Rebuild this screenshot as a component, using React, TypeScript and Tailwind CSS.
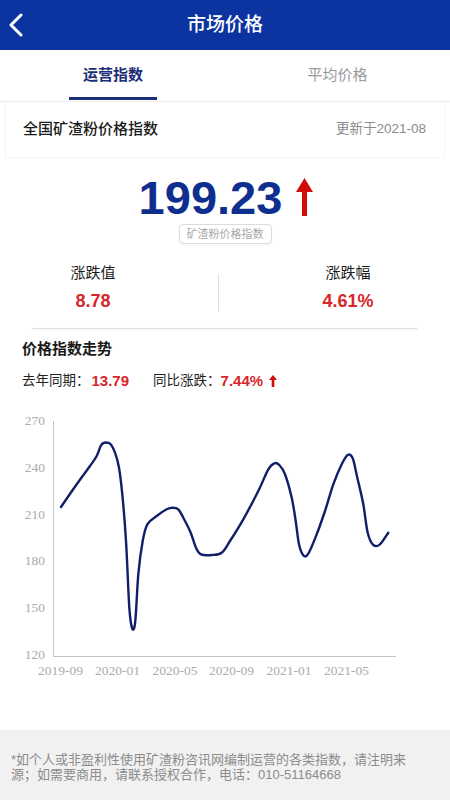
import React from "react"

const font = { fontFamily: '"Liberation Sans", "Noto Sans CJK SC", sans-serif' }

// curve points traced from the trend chart (svg coords)
const pts: [number, number][] = [
  [61, 111], [76.7, 88.3], [90, 70], [96.7, 60], [101, 49.3], [104.3, 46.7], [110, 47.7],
  [115, 56.7], [119, 71.7], [122.3, 98.3], [126, 145], [129.3, 211.7], [132.3, 232.7],
  [135.3, 225], [138.3, 178.3], [142.7, 145], [147.3, 128.3], [156.7, 120], [166.7, 113.3],
  [172.7, 111.7], [178.3, 113.3], [183.3, 121.7], [190.7, 136.7], [196, 151.7], [201, 158.3],
  [211.7, 159], [221.7, 156.7], [230, 145], [243.3, 123.3], [258.3, 95], [268.3, 73.3],
  [274.3, 67.3], [279.3, 69], [285, 78.3], [291.7, 101.7], [295.7, 125], [299, 148.3],
  [303.3, 159.3], [308.3, 157.7], [316.7, 138.3], [325, 115], [333.3, 88.3], [341.7, 68.3],
  [347.7, 59], [352.7, 62.3], [357.3, 81.7], [363.3, 108.3], [367.7, 136.7], [373.3, 149],
  [380, 148.3], [388.3, 136.7],
]

function smoothPath(p: [number, number][]) {
  let d = `M${p[0][0]},${p[0][1]}`
  for (let i = 0; i < p.length - 1; i++) {
    const p0 = p[i - 1] || p[i]
    const p1 = p[i]
    const p2 = p[i + 1]
    const p3 = p[i + 2] || p2
    const c1x = p1[0] + (p2[0] - p0[0]) / 6
    const c1y = p1[1] + (p2[1] - p0[1]) / 6
    const c2x = p2[0] - (p3[0] - p1[0]) / 6
    const c2y = p2[1] - (p3[1] - p1[1]) / 6
    d += ` C${c1x.toFixed(1)},${c1y.toFixed(1)} ${c2x.toFixed(1)},${c2y.toFixed(1)} ${p2[0]},${p2[1]}`
  }
  return d
}

const yTicks = [
  { label: "270", y: 26 },
  { label: "240", y: 73 },
  { label: "210", y: 120 },
  { label: "180", y: 166 },
  { label: "150", y: 213 },
  { label: "120", y: 260 },
]

const xTicks = [
  { label: "2019-09", x: 60.5 },
  { label: "2020-01", x: 117.5 },
  { label: "2020-05", x: 175 },
  { label: "2020-09", x: 231.5 },
  { label: "2021-01", x: 289 },
  { label: "2021-05", x: 346.5 },
]

function TrendChart() {
  return (
    <svg width="450" height="290" viewBox="0 0 450 290" className="block">
      <line x1="53.5" y1="25" x2="53.5" y2="260.5" stroke="#c4c4c4" strokeWidth="1" />
      <line x1="53" y1="260.5" x2="396" y2="260.5" stroke="#c4c4c4" strokeWidth="1" />
      {yTicks.map((t) => (
        <text
          key={t.label}
          x="45"
          y={t.y}
          textAnchor="end"
          dominantBaseline="middle"
          fontSize="13.5"
          fill="#ababab"
          fontFamily='"Liberation Serif", serif'
        >
          {t.label}
        </text>
      ))}
      {xTicks.map((t) => (
        <text
          key={t.label}
          x={t.x}
          y="276"
          textAnchor="middle"
          dominantBaseline="middle"
          fontSize="13.5"
          fill="#ababab"
          fontFamily='"Liberation Serif", serif'
        >
          {t.label}
        </text>
      ))}
      <path d={smoothPath(pts)} fill="none" stroke="#111f68" strokeWidth="2.4" strokeLinejoin="round" strokeLinecap="round" />
    </svg>
  )
}

export default function App() {
  return (
    <div className="w-[450px] min-h-[800px] bg-white flex flex-col" style={font}>
      {/* Header */}
      <div className="h-[50px] bg-[#0b34a0] flex items-center relative">
        <svg width="14" height="24" viewBox="0 0 14 24" className="absolute left-[9px] top-[13px]">
          <path d="M12 2 L2 12 L12 22" fill="none" stroke="#fff" strokeWidth="3" strokeLinecap="round" strokeLinejoin="round" />
        </svg>
        <div className="flex-1 text-center text-white text-[19px] font-medium">市场价格</div>
      </div>

      {/* Tabs */}
      <div className="h-[52px] flex border-b border-[#ececec]">
        <div className="w-[225px] flex justify-center">
          <div className="w-[88px] ml-[1px] flex flex-col items-center justify-center relative">
            <span className="text-[15px] font-bold text-[#1c2e78]">运营指数</span>
            <div className="absolute bottom-[1px] left-0 right-0 h-[3px] bg-[#1c2e78]" />
          </div>
        </div>
        <div className="w-[225px] flex items-center justify-center">
          <span className="text-[15px] text-[#9a9a9a]">平均价格</span>
        </div>
      </div>

      {/* Title card */}
      <div className="mx-[5px] h-[55px] flex items-center justify-between pl-[17px] pr-[18px] shadow-[0_1px_2px_rgba(0,0,0,0.04)] border-x border-[#f7f7f7]">
        <span className="text-[15px] font-medium text-[#1a1a1a]">全国矿渣粉价格指数</span>
        <span className="text-[13.5px] text-[#8a8a8a]">更新于2021-08</span>
      </div>

      {/* Big number */}
      <div className="mt-[17px] flex items-center justify-center gap-[14px] pl-[2px]">
        <span className="text-[47px] leading-[48px] font-bold text-[#0e2f8e]">199.23</span>
        <svg width="17" height="38" viewBox="0 0 17 38" className="mt-[-3px]">
          <path d="M8.5 0 L17 14 L11 14 L11 38 L6 38 L6 14 L0 14 Z" fill="#d10a0a" />
        </svg>
      </div>
      <div className="flex justify-center mt-[2px]">
        <span className="h-[20px] px-[7px] flex items-center border border-[#dcdcdc] rounded-[4px] text-[11px] text-[#a8a8a8] shadow-[0_1px_2px_rgba(0,0,0,0.05)]">
          矿渣粉价格指数
        </span>
      </div>

      {/* Stats */}
      <div className="mt-[19px] flex items-start">
        <div className="w-[186px] flex flex-col items-center">
          <span className="text-[15px] leading-[20px] text-[#1a1a1a]">涨跌值</span>
          <span className="mt-[7px] text-[18px] leading-[22px] font-bold text-[#d7262c]">8.78</span>
        </div>
        <div className="ml-[32px] mt-[11px] w-px h-[37px] bg-[#dedede]" />
        <div className="ml-[79px] w-[100px] flex flex-col items-center">
          <span className="text-[15px] leading-[20px] text-[#1a1a1a]">涨跌幅</span>
          <span className="mt-[7px] text-[18px] leading-[22px] font-bold text-[#d7262c]">4.61%</span>
        </div>
      </div>

      <div className="mt-[16px] mx-[32px] h-px bg-[#e2e2e2] shadow-[0_1px_2px_rgba(0,0,0,0.08)]" />

      {/* Trend */}
      <div className="mt-[10px] px-[22px] text-[15px] leading-[20px] font-bold text-[#1a1a1a]">价格指数走势</div>
      <div className="mt-[12px] px-[22px] flex items-center text-[13.5px] leading-[20px] text-[#222]">
        <span>去年同期：</span>
        <span className="ml-[2px] text-[15px] font-bold text-[#d7262c]">13.79</span>
        <span className="ml-[24px]">同比涨跌：</span>
        <span className="text-[15px] font-bold text-[#d7262c]">7.44%</span>
        <svg width="8" height="12" viewBox="0 0 8 12" className="ml-[6px]">
          <path d="M4 0 L8 5 L5.3 5 L5.3 12 L2.7 12 L2.7 5 L0 5 Z" fill="#d10a0a" />
        </svg>
      </div>

      <div className="mt-[5px]">
        <TrendChart />
      </div>

      {/* Footer */}
      <div className="mt-auto bg-[#f1f1f1] h-[70px] pt-[22px] pl-[11px] pr-[32px] text-[13px] leading-[15px] text-[#8c8c8c]">
        *如个人或非盈利性使用矿渣粉咨讯网编制运营的各类指数，请注明来源；如需要商用，请联系授权合作，电话：010-51164668
      </div>
    </div>
  )
}
